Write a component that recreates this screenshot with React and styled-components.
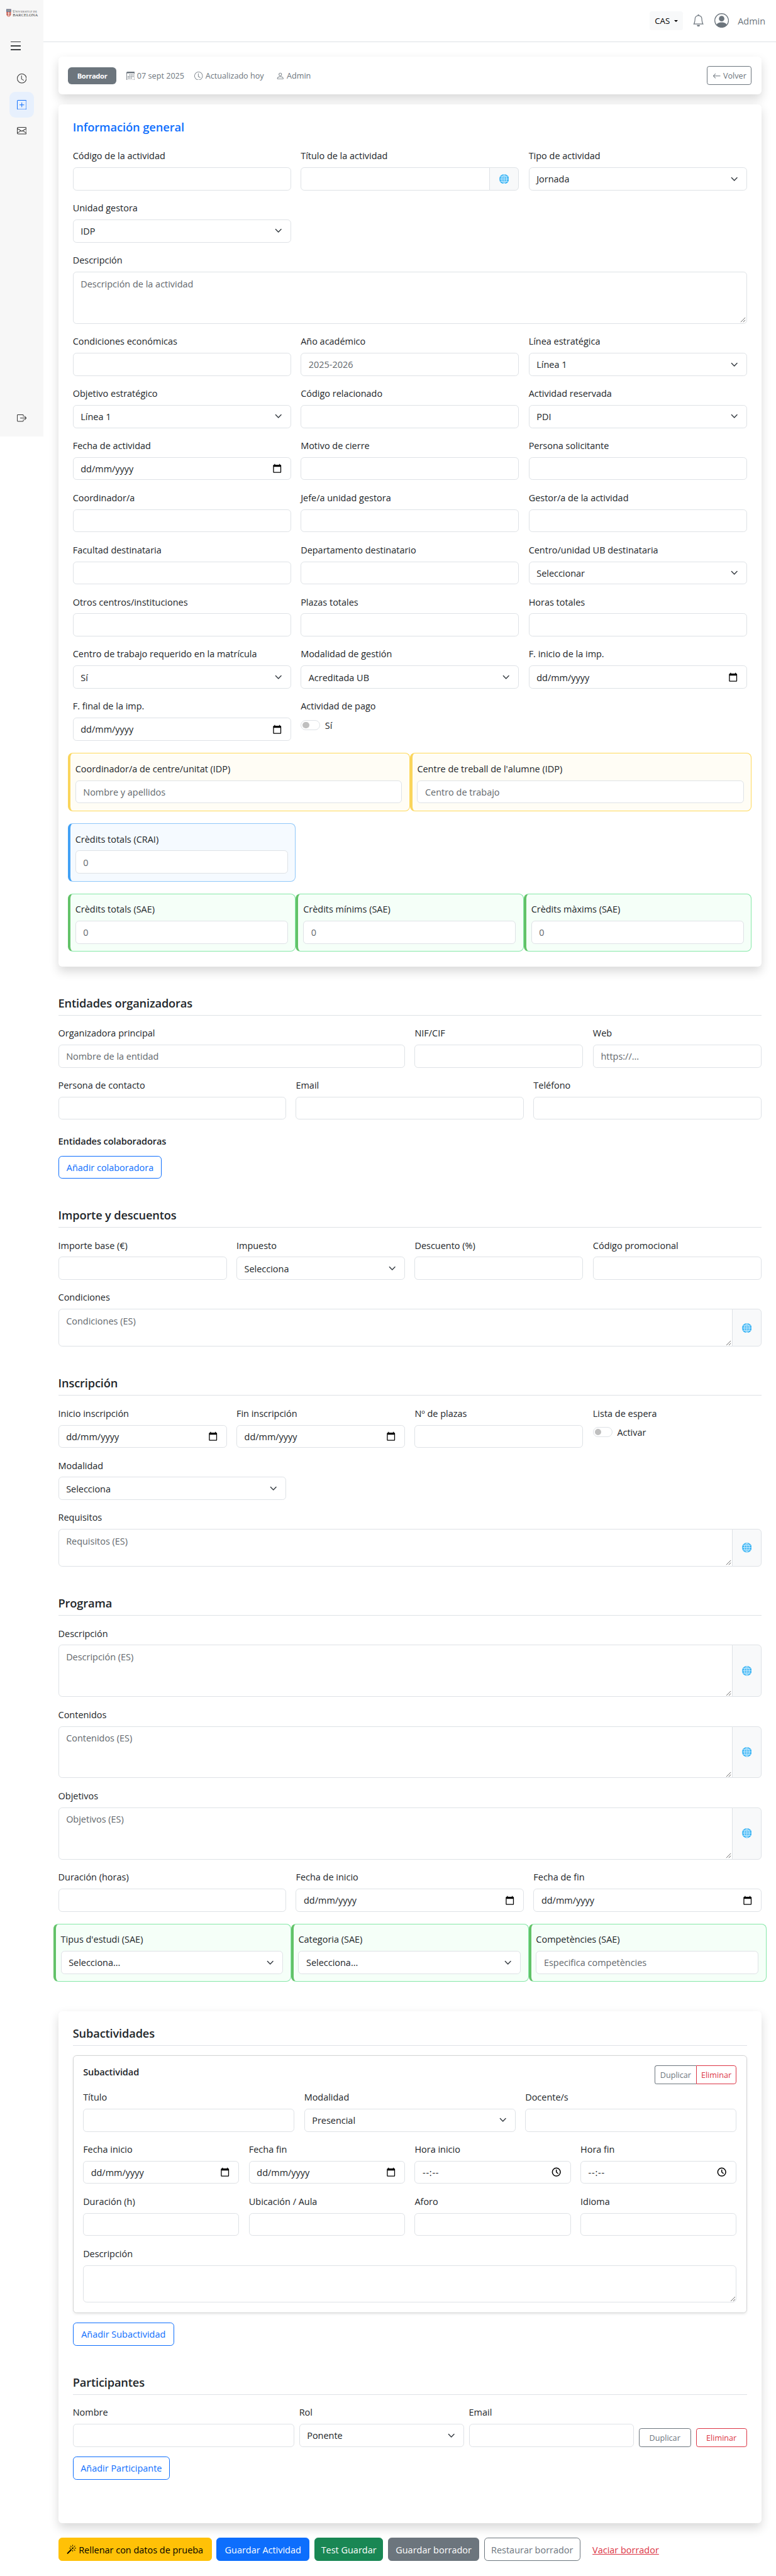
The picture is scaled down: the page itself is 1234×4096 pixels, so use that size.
import React from "react";
import styled, { createGlobalStyle, css } from "styled-components";
import {
  BsClock, BsPlusSquare, BsEnvelope, BsBoxArrowRight, BsBell, BsPersonCircle,
  BsCalendar3, BsPerson, BsArrowLeft, BsMagic,
} from "react-icons/bs";

const FONT = '"Open Sans", "Noto Sans", sans-serif';

const GlobalStyle = createGlobalStyle`
  *, *::before, *::after { box-sizing: border-box; }
  body {
    margin: 0;
    background: #fff;
    color: #212529;
    font-family: ${FONT};
  }
  h1, h2, h3, p { margin: 0; }
`;

/* ---------- page shell ---------- */

const Page = styled.div`
  zoom: 0.9642;
  display: flex;
  align-items: flex-start;
  width: 1279.8px;
  height: 4248px;
  overflow: hidden;
  background: #fff;
  font-size: 15px;
  line-height: 24px;
`;

const Sidebar = styled.aside`
  display: flex;
  flex-direction: column;
  flex: none;
  width: 72px;
  height: 720px;
  padding: 14px 8px 0;
  background: #f7f7f7;
`;

const Logo = styled.div`
  display: flex;
  align-items: center;
  gap: 2px;
  height: 16px;
  padding-left: 1px;
`;

const LogoText = styled.div`
  display: flex;
  flex-direction: column;
  font-family: "Liberation Serif", serif;
  color: #444;
  white-space: nowrap;
`;

const LogoLine = styled.span`
  font-size: ${(p) => p.$size}px;
  line-height: 5.5px;
  letter-spacing: ${(p) => p.$track}px;
  small { font-size: 4.4px; }
`;

const MenuButton = styled.div`
  display: flex;
  flex-direction: column;
  justify-content: space-between;
  width: 16px;
  height: 15px;
  margin: 38px 0 0 10px;
`;

const MenuBar = styled.span`
  height: 2px;
  background: #3f4244;
`;

const NavItem = styled.a`
  display: flex;
  align-items: center;
  justify-content: center;
  width: 40px;
  height: 43px;
  margin: ${(p) => p.$top || 0}px auto 0;
  border-radius: 10px;
  color: ${(p) => (p.$active ? "#0d6efd" : "#333")};
  background: ${(p) => (p.$active ? "#e7f0fd" : "transparent")};
  svg { width: 16px; height: 16px; }
`;

const NavBottom = styled.div`
  margin-top: auto;
  padding-bottom: 9px;
`;

const Main = styled.main`
  flex: 1;
  min-width: 0;
`;

const Topbar = styled.header`
  display: flex;
  align-items: center;
  justify-content: flex-end;
  height: 69px;
  padding-right: 16px;
  border-bottom: 1px solid #dee2e6;
  color: #6c757d;
`;

const LangButton = styled.button`
  display: flex;
  align-items: center;
  justify-content: space-between;
  width: 55px;
  height: 31px;
  padding: 1px 9px 0 8px;
  border: 0;
  border-radius: 4px;
  background: #f8f9fa;
  color: #000;
  font: 13.8px/21px ${FONT};
`;

const Caret = styled.span`
  border: 4px solid transparent;
  border-top-color: #000;
  border-bottom: 0;
`;

const TopIcon = styled.span`
  display: flex;
  margin-left: ${(p) => p.$left}px;
  svg { width: ${(p) => p.$size}px; height: ${(p) => p.$size}px; }
`;

const UserName = styled.span`
  width: 47px;
  margin-left: 15px;
  padding-top: 1px;
  white-space: nowrap;
`;

const Content = styled.div`
  display: flex;
  flex-direction: column;
  padding: 24px;
`;

const Card = styled.section`
  margin-bottom: ${(p) => p.$after}px;
  padding: ${(p) => p.$pad}px;
  border-radius: 6px;
  background: #fff;
  box-shadow: 0 8px 16px rgba(0, 0, 0, 0.15);
`;

/* ---------- status bar ---------- */

const StatusRow = styled.div`
  display: flex;
  align-items: center;
  gap: 16px;
  height: 31px;
`;

const Badge = styled.span`
  display: flex;
  align-items: center;
  justify-content: center;
  width: 80px;
  height: 28px;
  padding-top: 1px;
  border-radius: 6px;
  background: #6c757d;
  color: #fff;
  font-size: 11.6px;
  font-weight: 700;
  letter-spacing: -0.35px;
`;

const Meta = styled.span`
  display: flex;
  align-items: center;
  gap: 4px;
  width: ${(p) => p.$w}px;
  padding-top: 1px;
  white-space: nowrap;
  color: #6c757d;
  font-size: 13.1px;
  svg { width: 14px; height: 14px; flex: none; }
`;

/* ---------- buttons ---------- */

const tones = {
  primary: css`border-color: #0d6efd; color: #0d6efd; background: transparent;`,
  secondary: css`border-color: #6c757d; color: #6c757d; background: transparent;`,
  danger: css`border-color: #dc3545; color: #dc3545; background: transparent;`,
  warningFill: css`border-color: #ffc107; color: #000; background: #ffc107;`,
  primaryFill: css`border-color: #0d6efd; color: #fff; background: #0d6efd;`,
  successFill: css`border-color: #198754; color: #fff; background: #198754;`,
  secondaryFill: css`border-color: #6c757d; color: #fff; background: #6c757d;`,
  link: css`border-color: transparent; color: #dc3545; background: transparent; text-decoration: underline;`,
};

const Button = styled.button`
  display: flex;
  align-items: center;
  justify-content: center;
  gap: 4px;
  flex: none;
  width: ${(p) => p.$w}px;
  height: ${(p) => (p.$small ? 31 : 38)}px;
  padding: 1px 0 0;
  border: 1px solid;
  border-radius: ${(p) => (p.$small ? 4 : 6)}px;
  font-family: ${FONT};
  font-size: ${(p) => (p.$small ? 13.1 : 15)}px;
  line-height: 24px;
  white-space: nowrap;
  ${(p) => tones[p.$tone]}
  svg { width: ${(p) => (p.$small ? 14 : 16)}px; height: ${(p) => (p.$small ? 14 : 16)}px; flex: none; }
`;

const PushRight = styled(Button)`
  margin-left: auto;
`;

const ButtonGroup = styled.div`
  display: flex;
  ${Button}:first-child { border-radius: 4px 0 0 4px; border-right: 0; }
  ${Button}:last-child { border-radius: 0 4px 4px 0; }
`;

const Actions = styled.div`
  display: flex;
  gap: 8px;
`;

/* ---------- form parts ---------- */

const Title = styled.h2`
  height: 24px;
  margin-bottom: 24px;
  padding-top: 1px;
  color: #0d6efd;
  font-size: 19px;
  line-height: 24px;
  font-weight: 600;
  letter-spacing: -0.1px;
`;

const SectionTitle = styled.h2`
  height: 33px;
  margin-bottom: 16px;
  padding-top: 1px;
  border-bottom: 1px solid #dee2e6;
  font-size: 18.9px;
  line-height: 24px;
  font-weight: 600;
  letter-spacing: -0.15px;
`;

const SubTitle = styled.h3`
  height: ${(p) => (p.$after ? 19.2 + p.$after : 19.2)}px;
  padding-top: 1px;
  font-size: 15.1px;
  line-height: 19.2px;
  font-weight: 600;
  letter-spacing: -0.1px;
`;

const Grid = styled.div`
  display: grid;
  grid-template-columns: ${(p) => p.$cols || "repeat(3, minmax(0, 1fr))"};
  gap: ${(p) => p.$gap || "16px"};
  align-items: start;
  margin-bottom: ${(p) => p.$after || 0}px;
`;

const FieldWrap = styled.div`
  display: flex;
  flex-direction: column;
  min-width: 0;
  ${(p) => p.$span && css`grid-column: span ${p.$span};`}
  ${(p) => p.$full && css`grid-column: 1 / -1;`}
`;

const Label = styled.label`
  height: 32px;
  padding-top: 1px;
  line-height: 24px;
  white-space: nowrap;
`;

const Control = styled.div`
  position: relative;
  display: flex;
  flex: 1;
  align-items: ${(p) => (p.$rows ? "flex-start" : "center")};
  justify-content: space-between;
  height: ${(p) => (p.$rows ? p.$rows * 24 + 14 : 38)}px;
  padding: ${(p) => (p.$rows ? "6px 12px" : "0 12px")};
  border: 1px solid #dee2e6;
  border-radius: ${(p) => (p.$grouped ? "6px 0 0 6px" : "6px")};
  background: #fff;
  color: ${(p) => (p.$muted ? "#62676c" : "#212529")};
  white-space: nowrap;
`;

const ControlText = styled.span`
  padding-top: 1px;
  letter-spacing: ${(p) => (p.$time ? 0.8 : 0)}px;
`;

const ControlIcon = styled.span`
  display: flex;
  margin-right: ${(p) => p.$inset}px;
`;

const ControlRow = styled.div`
  display: flex;
`;

const Addon = styled.span`
  display: flex;
  align-items: center;
  justify-content: center;
  width: 49px;
  margin-left: -1px;
  border: 1px solid #dee2e6;
  border-radius: 0 6px 6px 0;
  background: #f8f9fa;
`;

const Grip = styled.svg`
  position: absolute;
  right: 1px;
  bottom: 1px;
`;

const SwitchRow = styled.div`
  display: flex;
  align-items: center;
  gap: 8px;
  height: 24px;
`;

const SwitchTrack = styled.span`
  display: flex;
  align-items: center;
  width: 32px;
  height: 16px;
  padding-left: 2px;
  border: 1px solid #dee2e6;
  border-radius: 16px;
`;

const SwitchKnob = styled.span`
  width: 11px;
  height: 11px;
  border-radius: 50%;
  background: #bfbfbf;
`;

const boxTones = {
  yellow: css`border-color: #ffd95a; border-left-color: #fad55c; background: #fffdf5;`,
  blue: css`border-color: #90c8fa; border-left-color: #42a1f5; background: #f5faff;`,
  green: css`border-color: #86e8a8; border-left-color: #62c268; background: #f5fff8;`,
};

const UnitBox = styled.div`
  height: 96px;
  padding: 12px 12px 12px 8px;
  border: 1px solid;
  border-left-width: 4.200px;
  border-radius: 8px;
  ${(p) => boxTones[p.$tone]}
`;

const UnitRow = styled.div`
  display: grid;
  grid-template-columns: repeat(${(p) => p.$n}, minmax(0, 1fr));
  margin: 20px -8px 0;
`;

const Section = styled.section`
  margin-bottom: 48px;
`;

const SubCard = styled.div`
  margin-bottom: 16px;
  padding: 16px;
  border: 1px solid #d3d4d5;
  border-radius: 6px;
  box-shadow: 0 2px 4px rgba(0, 0, 0, 0.075);
`;

const SubCardHead = styled.div`
  display: flex;
  justify-content: space-between;
  height: 39px;
`;

const RowActions = styled.div`
  display: flex;
  gap: 8px;
  align-self: end;
`;

/* ---------- small drawings ---------- */

const Chevron = () => (
  <svg width="16" height="12" viewBox="0 0 16 16" fill="none" stroke="#343a40" strokeWidth="2" strokeLinecap="round" strokeLinejoin="round">
    <path d="m2 5 6 6 6-6" />
  </svg>
);

const CalendarIcon = () => (
  <svg width="16" height="16" viewBox="0 0 24 24" fill="#000">
    <path d="M20 3h-1V1h-2v2H7V1H5v2H4c-1.100 0-2 .9-2 2v16c0 1.100.9 2 2 2h16c1.100 0 2-.9 2-2V5c0-1.100-.9-2-2-2zm0 18H4V8h16v13z" />
  </svg>
);

const TimeIcon = () => (
  <svg width="16" height="16" viewBox="0 0 16 16" fill="none" stroke="#000" strokeWidth="1.600">
    <circle cx="8" cy="8" r="6.600" />
    <path d="M8 3.800V8l3 2.600" />
  </svg>
);

const Globe = () => (
  <svg width="16" height="16" viewBox="0 0 16 16">
    <circle cx="8" cy="8" r="8" fill="#3bb4f4" />
    <g fill="none" stroke="#d6f1ff" strokeWidth="1">
      <path d="M8 1v14M1 8h14M2 4.300h12M2 11.700h12" />
      <ellipse cx="8" cy="8" rx="3.900" ry="7" />
    </g>
  </svg>
);

const ResizeGrip = () => (
  <Grip width="9" height="9" viewBox="0 0 9 9" stroke="#555" strokeWidth="0.900">
    <path d="M1 8.500 8.500 1M5 8.500 8.500 5" />
  </Grip>
);

const Crest = () => (
  <svg width="10" height="16" viewBox="0 0 10 16">
    <path d="M1 1.500h8v8c0 2.500-2 4.200-4 5-2-.8-4-2.500-4-5z" fill="#d98b80" />
    <path d="M1 1.500h8v4.500H1z" fill="#6a7f9b" />
    <path d="M2.500 3.500h5" stroke="#c8b48e" strokeWidth="1" />
    <path d="M5 6v8M1.500 9h7" stroke="#f3dcd4" strokeWidth="1" />
    <path d="M2.700 6.500v5M7.300 6.500v5" stroke="#b9453c" strokeWidth="1" />
  </svg>
);

/* ---------- composed fields ---------- */

function Field({ label, value, muted, kind, rows, span, full, addon }) {
  return (
    <FieldWrap $span={span} $full={full}>
      <Label>{label}</Label>
      <ControlRow>
        <Control $rows={rows} $muted={muted} $grouped={addon}>
          <ControlText $time={kind === "time"}>
            {kind === "date" ? "dd/mm/yyyy" : kind === "time" ? "--:--" : value}
          </ControlText>
          {kind === "select" && <Chevron />}
          {kind === "date" && <ControlIcon $inset={2}><CalendarIcon /></ControlIcon>}
          {kind === "time" && <ControlIcon $inset={3}><TimeIcon /></ControlIcon>}
          {rows && <ResizeGrip />}
        </Control>
        {addon && <Addon><Globe /></Addon>}
      </ControlRow>
    </FieldWrap>
  );
}

function Switch({ label, text }) {
  return (
    <FieldWrap>
      <Label>{label}</Label>
      <SwitchRow>
        <SwitchTrack><SwitchKnob /></SwitchTrack>
        <ControlText>{text}</ControlText>
      </SwitchRow>
    </FieldWrap>
  );
}

function Unit({ tone, ...field }) {
  return (
    <UnitBox $tone={tone}>
      <Field {...field} />
    </UnitBox>
  );
}

const FOUR = "repeat(4, minmax(0, 1fr))";

export default function App() {
  return (
    <>
      <GlobalStyle />
      <Page>
        <Sidebar>
          <Logo>
            <Crest />
            <LogoText>
              <LogoLine $size={5.8} $track={0.3}>U<small>NIVERSITAT DE</small></LogoLine>
              <LogoLine $size={6.8} $track={0}>BARCELONA</LogoLine>
            </LogoText>
          </Logo>
          <MenuButton><MenuBar /><MenuBar /><MenuBar /></MenuButton>
          <NavItem $top={25}><BsClock /></NavItem>
          <NavItem $active><BsPlusSquare /></NavItem>
          <NavItem><BsEnvelope /></NavItem>
          <NavBottom><NavItem><BsBoxArrowRight /></NavItem></NavBottom>
        </Sidebar>

        <Main>
          <Topbar>
            <LangButton>CAS<Caret /></LangButton>
            <TopIcon $left={15} $size={20}><BsBell /></TopIcon>
            <TopIcon $left={16} $size={24}><BsPersonCircle /></TopIcon>
            <UserName>Admin</UserName>
          </Topbar>

          <Content>
            <Card $pad={16} $after={16}>
              <StatusRow>
                <Badge>Borrador</Badge>
                <Meta $w={97}><BsCalendar3 />07 sept 2025</Meta>
                <Meta $w={118}><BsClock />Actualizado hoy</Meta>
                <Meta $w={60}><BsPerson />Admin</Meta>
                <PushRight $small $tone="secondary" $w={74}><BsArrowLeft />Volver</PushRight>
              </StatusRow>
            </Card>

            <Card $pad={24} $after={48}>
              <Title>Información general</Title>
              <Grid>
                <Field label="Código de la actividad" />
                <Field label="Título de la actividad" addon />
                <Field label="Tipo de actividad" kind="select" value="Jornada" />
                <Field label="Unidad gestora" kind="select" value="IDP" />
                <Field full label="Descripción" rows={3} muted value="Descripción de la actividad" />
                <Field label="Condiciones económicas" />
                <Field label="Año académico" muted value="2025-2026" />
                <Field label="Línea estratégica" kind="select" value="Línea 1" />
                <Field label="Objetivo estratégico" kind="select" value="Línea 1" />
                <Field label="Código relacionado" />
                <Field label="Actividad reservada" kind="select" value="PDI" />
                <Field label="Fecha de actividad" kind="date" />
                <Field label="Motivo de cierre" />
                <Field label="Persona solicitante" />
                <Field label="Coordinador/a" />
                <Field label="Jefe/a unidad gestora" />
                <Field label="Gestor/a de la actividad" />
                <Field label="Facultad destinataria" />
                <Field label="Departamento destinatario" />
                <Field label="Centro/unidad UB destinataria" kind="select" value="Seleccionar" />
                <Field label="Otros centros/instituciones" />
                <Field label="Plazas totales" />
                <Field label="Horas totales" />
                <Field label="Centro de trabajo requerido en la matrícula" kind="select" value="Sí" />
                <Field label="Modalidad de gestión" kind="select" value="Acreditada UB" />
                <Field label="F. inicio de la imp." kind="date" />
                <Field label="F. final de la imp." kind="date" />
                <Switch label="Actividad de pago" text="Sí" />
              </Grid>
              <UnitRow $n={2}>
                <Unit tone="yellow" label="Coordinador/a de centre/unitat (IDP)" muted value="Nombre y apellidos" />
                <Unit tone="yellow" label="Centre de treball de l'alumne (IDP)" muted value="Centro de trabajo" />
              </UnitRow>
              <UnitRow $n={3}>
                <Unit tone="blue" label="Crèdits totals (CRAI)" muted value="0" />
              </UnitRow>
              <UnitRow $n={3}>
                <Unit tone="green" label="Crèdits totals (SAE)" muted value="0" />
                <Unit tone="green" label="Crèdits mínims (SAE)" muted value="0" />
                <Unit tone="green" label="Crèdits màxims (SAE)" muted value="0" />
              </UnitRow>
            </Card>

            <Section>
              <SectionTitle>Entidades organizadoras</SectionTitle>
              <Grid $cols={FOUR} $after={16}>
                <Field span={2} label="Organizadora principal" muted value="Nombre de la entidad" />
                <Field label="NIF/CIF" />
                <Field label="Web" muted value="https://..." />
              </Grid>
              <Grid $after={24}>
                <Field label="Persona de contacto" />
                <Field label="Email" />
                <Field label="Teléfono" />
              </Grid>
              <SubTitle $after={16}>Entidades colaboradoras</SubTitle>
              <Button $tone="primary" $w={171}>Añadir colaboradora</Button>
            </Section>

            <Section>
              <SectionTitle>Importe y descuentos</SectionTitle>
              <Grid $cols={FOUR}>
                <Field label="Importe base (€)" />
                <Field label="Impuesto" kind="select" value="Selecciona" />
                <Field label="Descuento (%)" />
                <Field label="Código promocional" />
                <Field full label="Condiciones" rows={2} muted addon value="Condiciones (ES)" />
              </Grid>
            </Section>

            <Section>
              <SectionTitle>Inscripción</SectionTitle>
              <Grid $cols={FOUR} $after={16}>
                <Field label="Inicio inscripción" kind="date" />
                <Field label="Fin inscripción" kind="date" />
                <Field label="Nº de plazas" />
                <Switch label="Lista de espera" text="Activar" />
              </Grid>
              <Grid>
                <Field label="Modalidad" kind="select" value="Selecciona" />
                <Field full label="Requisitos" rows={2} muted addon value="Requisitos (ES)" />
              </Grid>
            </Section>

            <Section>
              <SectionTitle>Programa</SectionTitle>
              <Grid>
                <Field full label="Descripción" rows={3} muted addon value="Descripción (ES)" />
                <Field full label="Contenidos" rows={3} muted addon value="Contenidos (ES)" />
                <Field full label="Objetivos" rows={3} muted addon value="Objetivos (ES)" />
                <Field label="Duración (horas)" />
                <Field label="Fecha de inicio" kind="date" />
                <Field label="Fecha de fin" kind="date" />
              </Grid>
              <UnitRow $n={3}>
                <Unit tone="green" label="Tipus d'estudi (SAE)" kind="select" value="Selecciona..." />
                <Unit tone="green" label="Categoria (SAE)" kind="select" value="Selecciona..." />
                <Unit tone="green" label="Competències (SAE)" muted value="Especifica competències" />
              </UnitRow>
            </Section>

            <Card $pad={24} $after={24}>
              <Section>
                <SectionTitle>Subactividades</SectionTitle>
                <SubCard>
                  <SubCardHead>
                    <SubTitle>Subactividad</SubTitle>
                    <ButtonGroup>
                      <Button $small $tone="secondary" $w={68}>Duplicar</Button>
                      <Button $small $tone="danger" $w={67}>Eliminar</Button>
                    </ButtonGroup>
                  </SubCardHead>
                  <Grid $after={16}>
                    <Field label="Título" />
                    <Field label="Modalidad" kind="select" value="Presencial" />
                    <Field label="Docente/s" />
                  </Grid>
                  <Grid $cols={FOUR}>
                    <Field label="Fecha inicio" kind="date" />
                    <Field label="Fecha fin" kind="date" />
                    <Field label="Hora inicio" kind="time" />
                    <Field label="Hora fin" kind="time" />
                    <Field label="Duración (h)" />
                    <Field label="Ubicación / Aula" />
                    <Field label="Aforo" />
                    <Field label="Idioma" />
                    <Field full label="Descripción" rows={2} />
                  </Grid>
                </SubCard>
                <Button $tone="primary" $w={167}>Añadir Subactividad</Button>
              </Section>

              <Section>
                <SectionTitle>Participantes</SectionTitle>
                <Grid $cols="365.3px 272px 272px 178.7px" $gap="8px" $after={16}>
                  <Field label="Nombre" />
                  <Field label="Rol" kind="select" value="Ponente" />
                  <Field label="Email" />
                  <RowActions>
                    <Button $small $tone="secondary" $w={86.4}>Duplicar</Button>
                    <Button $small $tone="danger" $w={84.3}>Eliminar</Button>
                  </RowActions>
                </Grid>
                <Button $tone="primary" $w={160}>Añadir Participante</Button>
              </Section>
            </Card>

            <Actions>
              <Button $tone="warningFill" $w={253}><BsMagic />Rellenar con datos de prueba</Button>
              <Button $tone="primaryFill" $w={153.5}>Guardar Actividad</Button>
              <Button $tone="successFill" $w={113.5}>Test Guardar</Button>
              <Button $tone="secondaryFill" $w={150.5}>Guardar borrador</Button>
              <Button $tone="secondary" $w={158.5}>Restaurar borrador</Button>
              <Button $tone="link" $w={134}>Vaciar borrador</Button>
            </Actions>
          </Content>
        </Main>
      </Page>
    </>
  );
}
